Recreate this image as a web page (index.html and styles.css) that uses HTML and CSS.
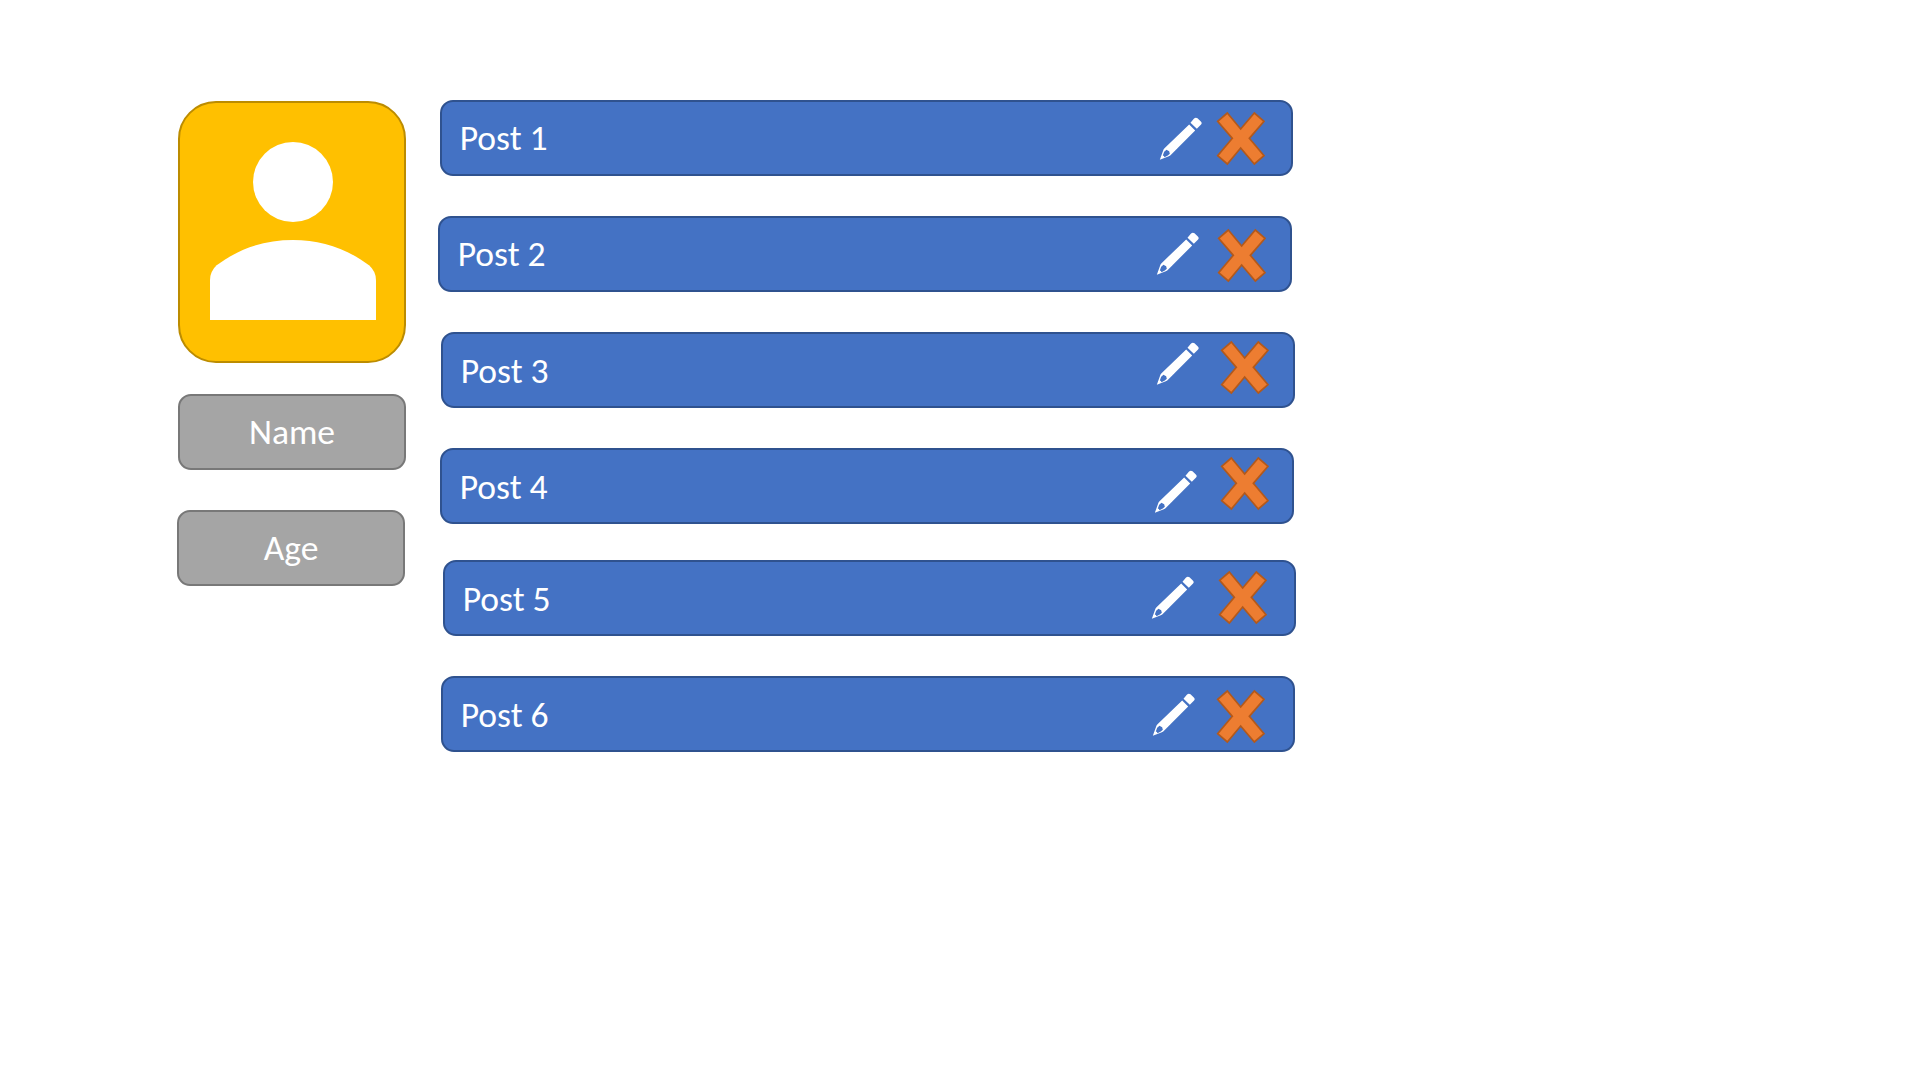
FILE: index.html
```html
<!DOCTYPE html>
<html lang="en">
<head>
<meta charset="utf-8">
<title>Profile</title>
<link rel="stylesheet" href="styles.css">
</head>
<body>
<svg class="symbols" aria-hidden="true">
  <symbol id="pencil" viewBox="-1.5 -1.5 132 132">
    <path fill="#fff" d="M103 4 Q108 -2 114 2 L124 12 Q129 17 124 22 L112 34 L93 16 Z"/>
    <path fill="#fff" fill-rule="evenodd" d="M89 21 L107 39 L33 113 Q30 116 26 117 L1 127 L11 99 Q12 95 15 92 Z M14 103 L10 114 Q14 115 15 119 L25 114 L31 109 L29 101 L21 97 Z"/>
  </symbol>
  <symbol id="cross" viewBox="0 0 150 165">
    <path fill="#ed7d31" stroke="#b3591b" stroke-width="5" d="M34 6 L74 54 L115 6 L144 31 L100 82 L144 134 L115 159 L74 111 L34 159 L5 134 L49 82 L5 31 Z"/>
  </symbol>
</svg>
<main class="page">
  <aside class="profile">
    <div class="avatar">
      <svg class="person" viewBox="0 0 498 534">
        <circle cx="249" cy="120" r="120" fill="#fff"/>
        <path fill="#fff" d="M0 534 V415 Q0 388 20 370 C90 318 165 294 249 294 S408 318 477 370 Q498 388 498 415 V534 Z"/>
      </svg>
    </div>
    <div class="field field-name">Name</div>
    <div class="field field-age">Age</div>
  </aside>
  <section class="posts">
    <article class="post post-1"><span class="label">Post 1</span><svg class="pencil"><use href="#pencil"/></svg><svg class="cross"><use href="#cross"/></svg></article>
    <article class="post post-2"><span class="label">Post 2</span><svg class="pencil"><use href="#pencil"/></svg><svg class="cross"><use href="#cross"/></svg></article>
    <article class="post post-3"><span class="label">Post 3</span><svg class="pencil"><use href="#pencil"/></svg><svg class="cross"><use href="#cross"/></svg></article>
    <article class="post post-4"><span class="label">Post 4</span><svg class="pencil"><use href="#pencil"/></svg><svg class="cross"><use href="#cross"/></svg></article>
    <article class="post post-5"><span class="label">Post 5</span><svg class="pencil"><use href="#pencil"/></svg><svg class="cross"><use href="#cross"/></svg></article>
    <article class="post post-6"><span class="label">Post 6</span><svg class="pencil"><use href="#pencil"/></svg><svg class="cross"><use href="#cross"/></svg></article>
  </section>
</main>
</body>
</html>
```

FILE: styles.css
```css
* { box-sizing: border-box; }

body {
  margin: 0;
  background: #fff;
  color: #fff;
  font-family: Carlito, Calibri, Lato, sans-serif;
  font-size: 35.6px;
  line-height: 40px;
}

.symbols { display: block; width: 0; height: 0; }

.page {
  display: flex;
  align-items: flex-start;
  gap: 32px;
  min-height: 1080px;
  padding: 100px 0 0 178px;
}

.profile { width: 228px; padding-top: 1px; }

.avatar {
  display: flex;
  justify-content: center;
  height: 262px;
  padding: 39px 0 0 1px;
  border: 2px solid #bc8c00;
  border-radius: 38px;
  background: #ffc000;
}

.person { width: 166px; height: 178px; }

.field {
  height: 76px;
  padding-top: 16px;
  border: 2px solid #787878;
  border-radius: 13px;
  background: #a5a5a5;
  text-align: center;
}

.field-name { margin-top: 31px; }
.field-age { width: 228px; margin: 40px 0 0 -1px; }

.posts {
  display: flex;
  flex-direction: column;
  gap: 40px;
}

.post {
  display: flex;
  align-items: flex-start;
  width: 854px;
  height: 76px;
  margin-left: var(--shift);
  padding: 0 var(--inset) 0 17.7px;
  border: 2px solid #2f528f;
  border-radius: 13px;
  background: #4472c4;
}

.label { margin: 17px auto 0 0; white-space: nowrap; }

.pencil {
  flex: none;
  width: 44px;
  height: 44px;
  margin: var(--pencil-top) var(--gap) 0 0;
}

.cross {
  flex: none;
  width: 50px;
  height: 55px;
  margin-top: var(--cross-top);
}

.post-1 { --shift: 2px; --inset: 25px; --gap: 13px; --pencil-top: 14.5px; --cross-top: 8.5px; width: 853px; }
.post-2 { --shift: 0px; --inset: 23px; --gap: 17px; --pencil-top: 14.3px; --cross-top: 10px; }
.post-3 { --shift: 3px; --inset: 23px; --gap: 20px; --pencil-top: 7.5px; --cross-top: 6.4px; }
.post-4 { --shift: 2px; --inset: 22px; --gap: 22px; --pencil-top: 20px; --cross-top: 6.4px; }
.post-5 { --shift: 5px; --inset: 26.3px; --gap: 23px; --pencil-top: 14px; --cross-top: 8.4px; width: 853px; margin-top: -4px; }
.post-6 { --shift: 3px; --inset: 27px; --gap: 20.5px; --pencil-top: 15px; --cross-top: 10.8px; }

.post-1 .label,
.post-2 .label { margin-top: 16px; }
```
